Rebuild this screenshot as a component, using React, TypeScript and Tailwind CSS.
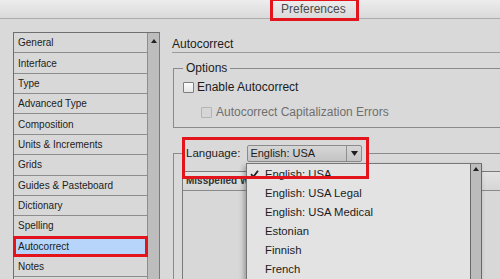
import { Fragment } from 'react';

const navItems = [
    'General',
    'Interface',
    'Type',
    'Advanced Type',
    'Composition',
    'Units & Increments',
    'Grids',
    'Guides & Pasteboard',
    'Dictionary',
    'Spelling',
    'Autocorrect',
    'Notes',
    '',
];

const languages = ['English: USA', 'English: USA Legal', 'English: USA Medical', 'Estonian', 'Finnish', 'French'];

const Checkbox = ({ disabled = false }: { disabled?: boolean }) => (
    <span
        className={
            disabled
                ? 'block w-[11px] h-[11px] border border-[#b4b4b4] bg-[#d6d6d6] rounded-[1px]'
                : 'block w-[11px] h-[11px] border border-[#7e7e7e] bg-gradient-to-b from-[#fbfbfb] to-[#e6e6e6] rounded-[1px]'
        }
    />
);

const UpArrow = () => (
    <svg width="6" height="4" viewBox="0 0 6 4" className="block">
        <path d="M0 4 L3 0 L6 4 Z" fill="#222" />
    </svg>
);

const App = () => {
    return (
        <div className="relative w-[500px] h-[279px] overflow-hidden bg-[#d9d9d9] text-[#1c1c1c] font-['Liberation_Sans',Arial,sans-serif]">
            {/* title bar */}
            <div className="h-[19px] border-b border-[#acacac] bg-gradient-to-b from-[#ededed] to-[#dadada] flex items-center pl-[281px]">
                <span className="text-[12px] leading-[14px] text-[#4b4b4b]">Preferences</span>
            </div>

            <div className="flex items-start">
                {/* sidebar list */}
                <div className="ml-[13px] mt-[13px] flex border-l border-t border-[#6f6f6f] bg-[#d7d7d7]">
                    <div className="w-[134px] flex flex-col">
                        {navItems.map((item, i) => (
                            <div
                                key={i}
                                className={
                                    'relative h-[20.36px] shrink-0 border-b border-r border-[#8d8d8d] pl-[4px] flex items-center text-[10px] ' +
                                    (item === 'Autocorrect' ? 'bg-[#b7d5fa]' : 'bg-[#d8d8d8]')
                                }
                            >
                                {item}
                                {item === 'Autocorrect' && (
                                    <div className="absolute -left-[1px] -top-[1px] -right-[1px] -bottom-[1px] border-[3px] border-[#e4141d]" />
                                )}
                            </div>
                        ))}
                    </div>
                    <div className="w-[12px] self-stretch bg-[#bdbdbd] border-r border-[#7a7a7a] flex justify-center pt-[6px]">
                        <UpArrow />
                    </div>
                </div>

                {/* main panel */}
                <div className="ml-[12px] w-[340px] shrink-0">
                    <div className="mt-[17px] h-[17px] border-b border-[#9a9a9a] text-[12px] leading-[16px]">Autocorrect</div>

                    <fieldset className="mt-[8px] ml-[1px] border border-[#8a8a8a] pl-[9px] pb-[8px]">
                        <legend className="px-[3px] text-[12px] leading-[14px]">Options</legend>
                        <div className="mt-[5px] h-[14px] flex items-center gap-[3px] text-[12px]">
                            <Checkbox />
                            <span>Enable Autocorrect</span>
                        </div>
                        <div className="mt-[11px] h-[14px] ml-[18px] flex items-center gap-[4px] text-[12px] text-[#6f6f6f]">
                            <Checkbox disabled />
                            <span>Autocorrect Capitalization Errors</span>
                        </div>
                    </fieldset>

                    <fieldset className="mt-[17px] ml-[1px] h-[200px] border border-[#8a8a8a] pl-[8px]">
                        <legend className="px-[4px] flex items-center">
                            <span className="text-[11.5px] leading-[17px]">Language:</span>
                            <div className="ml-[7px] w-[115px] h-[17px] flex items-center border border-[#8a8a8a] rounded-[2px] bg-gradient-to-b from-[#d6d6d6] to-[#c4c4c4]">
                                <span className="flex-1 pl-[2px] text-[11px] leading-[15px]">English: USA</span>
                                <span className="w-[15px] h-full border-l border-[#8f8f8f] flex items-center justify-center">
                                    <svg width="7" height="5" viewBox="0 0 7 5" className="block">
                                        <path d="M0 0 L7 0 L3.5 5 Z" fill="#1e1e1e" />
                                    </svg>
                                </span>
                            </div>
                        </legend>
                        <div className="mt-[9px] w-[400px] h-[120px] border-l border-t border-[#7a7a7a] bg-[#d8d8d8]">
                            <div className="h-[19px] border-b border-[#8a8a8a] bg-gradient-to-b from-[#e3e3e3] to-[#d6d6d6] pl-[3px] text-[10px] font-bold leading-[18px] text-[#333]">
                                Misspelled Word
                            </div>
                        </div>
                    </fieldset>
                </div>
            </div>

            {/* open language menu */}
            <div className="absolute left-[246px] top-[163px] w-[236px] h-[130px] flex bg-[#e3e3e3] border-l border-t border-[#767676] shadow-[-2px_3px_5px_rgba(0,0,0,0.3)]">
                <div className="flex-1 pt-[1px]">
                    {languages.map((lang, i) => (
                        <Fragment key={lang}>
                            <div className="relative h-[19px] pl-[18px] text-[11.3px] leading-[19px]">
                                {i === 0 && (
                                    <svg width="9" height="8" viewBox="0 0 9 8" className="absolute left-[3px] top-[5px]">
                                        <path d="M1 4.2 L3.4 6.8 L8 0.8" stroke="#222" strokeWidth="1.8" fill="none" />
                                    </svg>
                                )}
                                {lang}
                            </div>
                        </Fragment>
                    ))}
                </div>
                <div className="w-[12px] bg-[#bcbcbc] border-l border-r border-[#686868] flex justify-center pt-[3px]">
                    <UpArrow />
                </div>
            </div>

            {/* annotation boxes */}
            <div className="absolute left-[270px] -top-[2px] w-[89px] h-[23px] border-[3px] border-[#e4141d]" />
            <div className="absolute left-[182px] top-[137px] w-[187px] h-[42px] border-[3px] border-[#e4141d]" />
        </div>
    );
};

export default App;
